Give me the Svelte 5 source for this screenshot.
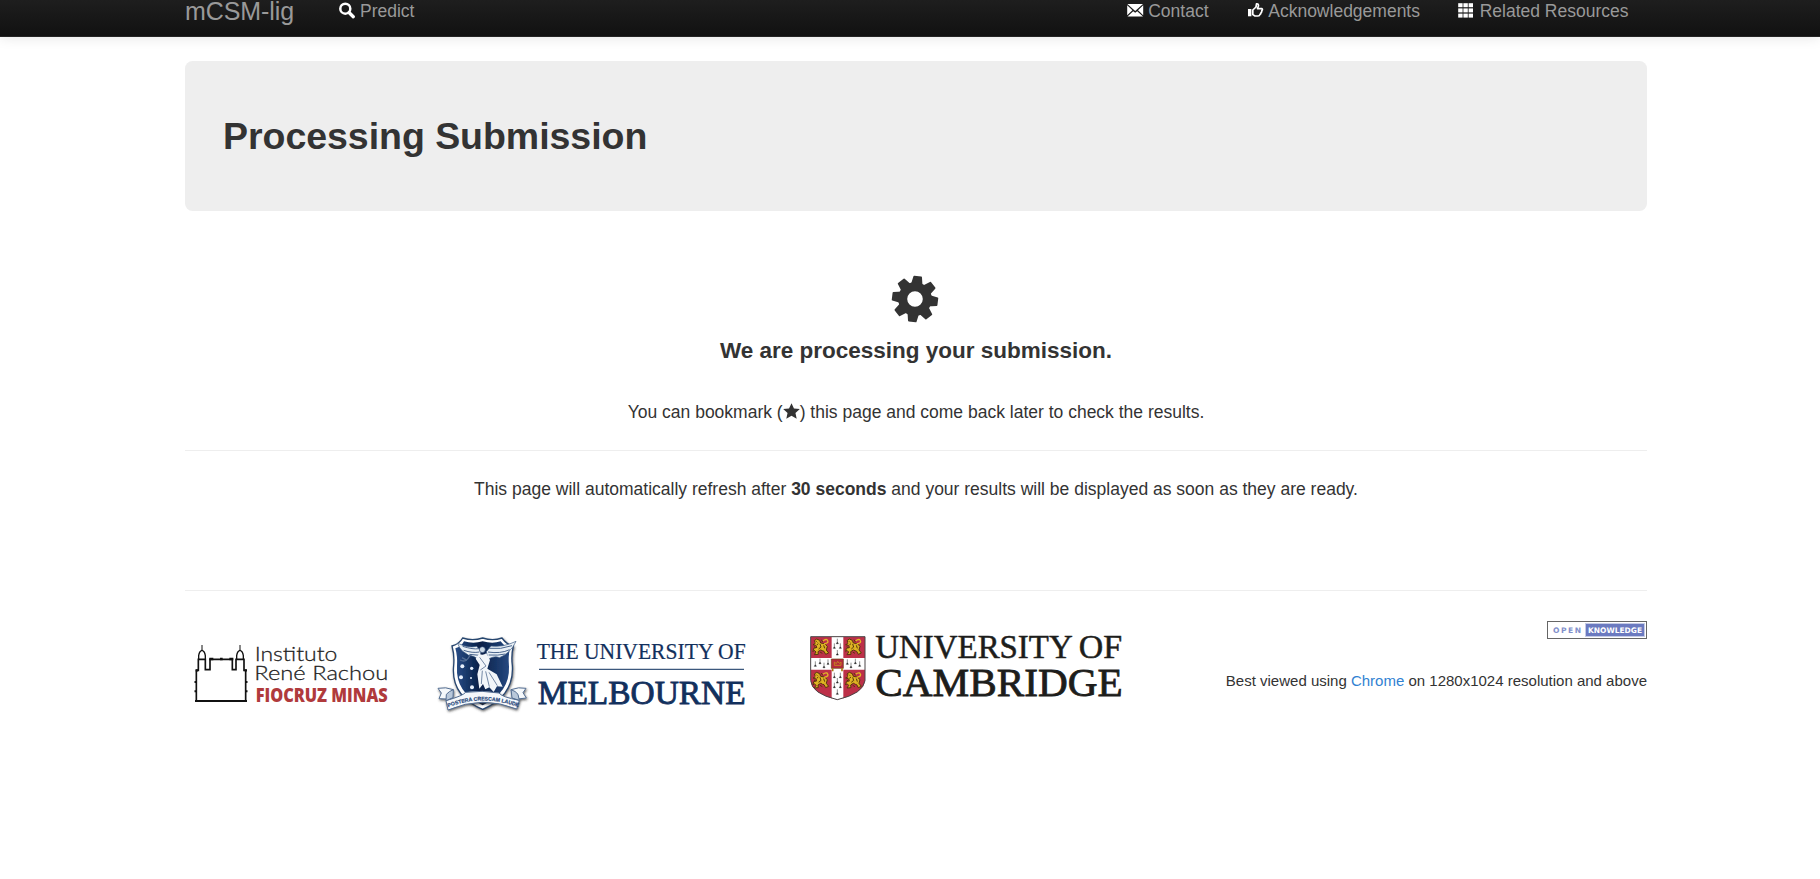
<script>
  const ermine = [
    [112, 52], [103, 66], [121, 66], [112, 86],
    [46, 120], [60, 112], [72, 124], [84, 114],
    [142, 114], [153, 124], [166, 112], [179, 120],
    [103, 154], [121, 154], [112, 170], [103, 184], [121, 184], [112, 204]
  ];
  const lions = [[38, 42], [136, 42], [38, 142], [136, 142]];
  const squares = [0, 5.2, 10.4].flatMap((y) => [0, 5.2, 10.4].map((x) => [x, y]));
  const teeth = [0, 45, 90, 135, 180, 225, 270, 315];
</script>

<header class="navbar">
  <a class="brand" href="#home">mCSM-lig</a>
  <a class="item" href="#predict">
    <svg class="icon" viewBox="0 0 18 18"><circle cx="7.3" cy="6.7" r="5" fill="none" stroke="#fff" stroke-width="2.5"/><path d="M11 10.6L15.3 14.7" stroke="#fff" stroke-width="3.4" stroke-linecap="round"/></svg>Predict</a>
  <nav>
    <a class="item" href="#contact">
      <svg class="icon" viewBox="0 0 18 18"><path d="M1.4 2H17L9.2 8.9ZM1.2 3.3L6.4 8.2L1.2 13.2ZM17.2 3.3V13.2L12 8.2ZM1.5 14.5L7.2 9.2L9.2 10.8L11.2 9.2L17 14.5Z" fill="#fff"/></svg>Contact</a>
    <a class="item" href="#acknowledgements">
      <svg class="icon" viewBox="0 0 18 18"><path d="M2 7H5.4V14.3H2Z" fill="#fff"/><path d="M6.8 12.6V8L10 5L10.5 1.9Q12.5 1.4 12.5 3.8L11.5 6.6H15.9Q17 7.7 15.8 8.6Q16 10 15 10.7Q15 12 14 12.4Q13.6 14 12 14H9Z" fill="none" stroke="#fff" stroke-width="1.7" stroke-linejoin="round"/></svg>Acknowledgements</a>
    <a class="item" href="#resources">
      <svg class="icon" viewBox="0 0 18 18">{#each squares as [x, y]}<rect x={x + 1.2} y={y + 1.2} width="4.4" height="4" fill="#fff"/>{/each}</svg>Related Resources</a>
  </nav>
</header>

<main>
  <section class="hero"><h1>Processing Submission</h1></section>

  <section class="status">
    <svg class="gear" viewBox="-24 -24 48 48">
      <g transform="rotate(7)" fill="#333">
        {#each teeth as a}<path d="M-6 -13L-4.3 -22.3Q-4.2 -23 -3.5 -23H3.5Q4.2 -23 4.3 -22.3L6 -13Z" transform="rotate({a})"/>{/each}
      </g>
      <circle r="12.3" fill="none" stroke="#333" stroke-width="9"/>
    </svg>
    <h4>We are processing your submission.</h4>
    <p class="bookmark">You can bookmark (<svg class="star" viewBox="0 0 18 18"><path d="M9 .2L11.6 5.8L17.8 6.3L13.2 10.5L14.5 16.6L9 13.6L3.5 16.6L4.8 10.5L.2 6.3L6.4 5.8Z" fill="#333"/></svg>) this page and come back later to check the results.</p>
    <hr />
    <p class="refresh">This page will automatically refresh after <b>30 seconds</b> and your results will be displayed as soon as they are ready.</p>
  </section>

  <footer>
    <svg class="fiocruz" viewBox="15 0 645 255">
      <g fill="none" stroke="#111" stroke-width="5">
        <path d="M45 216H201" stroke-width="6"/>
        <path d="M49 214V124H55V91H76V122H90V91H157V122H168V91H192V124H197V214"/>
        <path d="M56 91V80Q58 66 66 64Q74 66 76 80V91M170 91V80Q172 66 180 64Q188 66 190 80V91" stroke-width="4"/>
        <path d="M66 65V48M180 65V48" stroke-width="3"/>
        <path d="M47 124H54M47 156V162M47 184V190M199 156V162M199 184V190M194 124H201M88 90H100M120 90H128M148 90H160" stroke-width="7"/>
      </g>
      <g font-family="Lato" font-weight="300" font-size="60" fill="#222" stroke="#222" stroke-width=".8">
        <text x="224" y="96" textLength="248" lengthAdjust="spacingAndGlyphs">Instituto</text>
        <text x="223" y="154" textLength="402" lengthAdjust="spacingAndGlyphs">René Rachou</text>
      </g>
      <text x="227" y="219" font-family="Open Sans" font-weight="800" font-size="56" fill="#b03a3c" textLength="396" lengthAdjust="spacingAndGlyphs">FIOCRUZ MINAS</text>
    </svg>

    <svg class="melbourne" viewBox="0 0 990 285">
      <defs>
        <linearGradient id="navy" x1="0" y1="0" x2="1" y2="0"><stop offset="0" stop-color="#284d87"/><stop offset=".45" stop-color="#071f46"/><stop offset="1" stop-color="#274a82"/></linearGradient>
        <filter id="drop" x="-10%" y="-10%" width="120%" height="125%"><feDropShadow dx="2" dy="4" stdDeviation="3" flood-color="#333" flood-opacity=".75"/></filter>
        <path id="motto" d="M53 251Q156 208 267 250"/>
      </defs>
      <g filter="url(#drop)">
        <path d="M98 42Q128 52 158 42Q188 52 216 42Q230 62 250 66Q243 94 247 125Q253 215 158 256Q62 215 71 125Q74 94 66 66Q88 60 98 42Z" fill="#fff" stroke="#28466f" stroke-width="4"/>
        <path d="M102 52Q130 60 158 52Q188 60 212 52Q224 68 240 73Q234 96 237 128Q240 205 158 244Q76 205 81 128Q83 96 76 73Q94 68 102 52Z" fill="url(#navy)"/>
      </g>
      <path d="M82 57Q113 73 140 67L153 82L149 108Q130 94 116 94Q105 86 98 82Q88 72 82 57ZM258 52Q218 71 183 66L169 83L174 106Q194 94 208 101Q226 94 236 83Q250 71 258 52Z" fill="#e9f0f6" stroke="#365680" stroke-width="2"/>
      <path d="M98 67Q130 77 146 74M101 79Q128 88 148 84M118 91L149 94M246 65Q212 77 178 73M239 77Q211 90 174 84M226 90Q206 95 176 93" fill="none" stroke="#49658d" stroke-width="3"/>
      <circle cx="157" cy="77" r="9" fill="#cbd9e6" stroke="#1b3764" stroke-width="2"/>
      <path d="M147 89Q158 96 169 88L180 108L172 134L200 151L218 188L201 187L191 204L178 190L166 196L159 180L148 194L142 151L149 123L137 104Z" fill="#f2f6fa"/>
      <path d="M149 100L168 126L151 138M157 140L154 180M167 142L178 188M177 145L202 185" fill="none" stroke="#7489a6" stroke-width="3"/>
      <path d="M90 108Q108 118 119 96M96 101L111 109" fill="none" stroke="#536d94" stroke-width="4"/>
      <g fill="#e7f0fb"><circle cx="97" cy="127" r="6"/><circle cx="93" cy="160" r="6"/><circle cx="125" cy="133" r="5"/><circle cx="126" cy="190" r="6"/><circle cx="123" cy="162" r="3"/></g>
      <g filter="url(#drop)" fill="#f5f8fb" stroke="#536d91" stroke-width="3">
        <path d="M70 197Q47 188 24 193L34 207L27 224L51 225L65 216ZM243 197Q266 188 288 193L279 206L289 222L263 225L248 216Z"/>
        <path d="M48 230Q100 215 107 205Q156 198 207 207Q215 219 268 229L260 255Q157 213 54 258Z"/>
        <path d="M70 197L69 221L48 230L49 211Q58 201 70 197ZM243 197L246 222L268 229L264 211Q257 201 243 197Z" fill="#b9c8da"/>
      </g>
      <text font-family="Liberation Sans" font-weight="700" font-size="15.5" fill="#27477a" stroke="#27477a" stroke-width=".6" text-anchor="middle"><textPath href="#motto" startOffset="50%">POSTERA CRESCAM LAUDE</textPath></text>
      <g font-family="Liberation Serif" fill="#12305d" stroke="#12305d">
        <text x="320" y="104" font-size="69" stroke-width=".6" textLength="627" lengthAdjust="spacingAndGlyphs">THE UNIVERSITY OF</text>
        <text x="323" y="239" font-size="103" stroke-width="2.6" textLength="624" lengthAdjust="spacingAndGlyphs">MELBOURNE</text>
      </g>
      <path d="M327 136H942" stroke="#3c587d" stroke-width="4"/>
    </svg>

    <svg class="cambridge" viewBox="0 0 990 255">
      <defs><clipPath id="shield"><path d="M32 38H195V170Q190 209 112 227Q35 209 32 170Z"/></clipPath></defs>
      <g clip-path="url(#shield)">
        <rect x="30" y="36" width="168" height="192" fill="#bd3048"/>
        <path d="M95 36H130V102H196V137H130V230H95V137H30V102H95Z" fill="#fff"/>
        {#each lions as [x, y]}
          <g transform="translate({x} {y})">
            <path d="M5 8L12 3L21 7L24 15L36 17L44 25L41 36L48 45L39 49L34 40L24 36L16 41L17 49L5 50L10 42L5 37L1 41L3 31L13 28L9 22L1 20L9 16Z" fill="#d9ad22" stroke="#59370d" stroke-width="3"/>
            <path d="M34 18Q52 15 43 5Q37 3 31 9M15 8L10 15L22 21L14 28M25 20L34 28L29 36M7 36L16 33" fill="none" stroke="#e2b925" stroke-width="4"/>
            <path d="M11 10L14 13M17 17L12 21M22 18L25 27L18 33M33 22L36 31M26 5L30 12M4 26L9 29M22 42L29 46" fill="none" stroke="#59370d" stroke-width="3"/>
          </g>
        {/each}
        {#each ermine as [x, y]}<path d="M{x} {y - 8}V{y + 2}L{x + 3} {y + 7}H{x - 3}L{x} {y + 2}" fill="#222" stroke="#222" stroke-width="1.5"/>{/each}
        <path d="M94 105H130V133H94Z" fill="#b52b3d" stroke="#67410f" stroke-width="2"/>
        <path d="M98 133V142M126 133V142" stroke="#a8790d" stroke-width="5"/>
        <path d="M103 114L109 119L113 112L118 118L123 114V124H103Z" fill="none" stroke="#c58420" stroke-width="3"/>
      </g>
      <path d="M32 38H195V170Q190 209 112 227Q35 209 32 170Z" fill="none" stroke="#4a4547" stroke-width="3"/>
      <g font-family="Liberation Serif" fill="#1d1d1b" stroke="#1d1d1b">
        <text x="226" y="102" font-size="99" stroke-width="1.5" textLength="592" lengthAdjust="spacingAndGlyphs">UNIVERSITY</text>
        <text x="836" y="102" font-size="99" stroke-width="1.5" textLength="130" lengthAdjust="spacingAndGlyphs">OF</text>
        <text x="226" y="215" font-size="123" stroke-width="2.5" textLength="742" lengthAdjust="spacingAndGlyphs">CAMBRIDGE</text>
      </g>
    </svg>

    <div class="notes">
      <svg class="badge" viewBox="0 0 100 18">
        <rect x=".5" y=".5" width="99" height="17" fill="#fff" stroke="#666"/>
        <rect x="38" y="2" width="60" height="14" fill="#c5cbe6"/><rect x="39" y="3" width="58" height="12" fill="#6b7ac0"/>
        <g font-family="DejaVu Sans" font-weight="700" font-size="7.6">
          <text x="6" y="12" fill="#8290cb" textLength="28">OPEN</text>
          <text x="41" y="12" fill="#fff" textLength="54" lengthAdjust="spacingAndGlyphs">KNOWLEDGE</text>
        </g>
      </svg>
      <p>Best viewed using <a href="#chrome">Chrome</a> on 1280x1024 resolution and above</p>
    </div>
  </footer>
</main>

<style>
  :global(body) { margin: 0; background: #fff; color: #333; font: 17.5px/25px "Liberation Sans", Arial, sans-serif; overflow: hidden; }
  a { text-decoration: none; }
  .navbar { box-sizing: border-box; height: 37px; padding: 0 191.5px 0 185px; display: flex; align-items: flex-start; background: linear-gradient(#1e1e1e, #111); border-bottom: 1px solid #252525; box-shadow: 0 1px 12.5px rgba(0, 0, 0, .1); }
  .navbar a { color: #999; }
  .brand { font-size: 25px; margin-top: -1px; width: 152.5px; letter-spacing: -.08px; }
  .item { display: flex; margin-top: -1px; white-space: nowrap; }
  .icon { width: 18px; height: 18px; margin: 3px 4.5px 0 0; flex: none; }
  nav { display: flex; gap: 37.2px; margin-left: auto; }
  main { width: 1462px; margin: 24px 0 0 185px; }
  .hero { box-sizing: border-box; height: 150px; padding: 50px 38px; border-radius: 7.5px; background: #eee; }
  h1 { margin: 0; font-size: 37.5px; line-height: 50px; letter-spacing: -.04px; }
  .status { text-align: center; padding-top: 64px; }
  .gear { display: block; width: 48px; height: 48px; margin: 0 auto; position: relative; left: -1.5px; }
  h4 { margin: 15px 0 0; font-size: 22.5px; line-height: 25px; }
  p { margin: 0; }
  .bookmark { margin-top: 37px; }
  .star { width: 17px; height: 17px; vertical-align: -1.5px; }
  hr { margin: 25px 0 26px; height: 1px; border: 0; background: #eee; }
  footer { display: flex; align-items: flex-start; margin-top: 88px; border-top: 1px solid #eee; padding-top: 30px; }
  footer svg { display: block; flex: none; overflow: visible; }
  .fiocruz { width: 215px; height: 85px; margin: 8px 30px 0 0; }
  .melbourne { width: 330px; height: 95px; margin: 3px 40px 0 0; }
  .cambridge { width: 330px; height: 85px; margin-top: 3px; }
  .notes { flex: 1; display: flex; flex-direction: column; align-items: flex-end; gap: 29px; font-size: 15px; white-space: nowrap; }
  .notes a { color: #3182d2; }
  .badge { width: 100px; height: 18px; }
</style>
